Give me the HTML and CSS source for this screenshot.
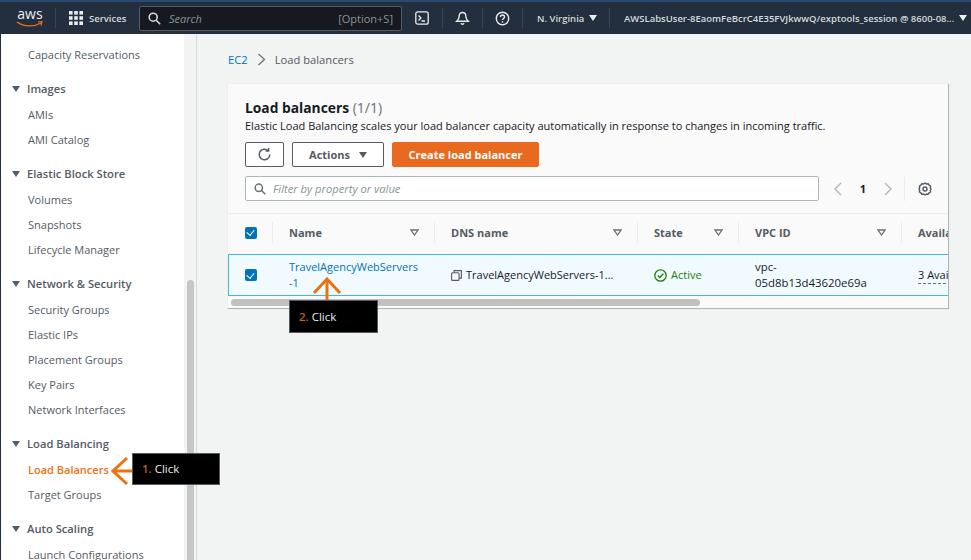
FILE: index.html
```html
<!DOCTYPE html>
<html>
    <head>
        <link rel="stylesheet" href="styles.css">
    </head>
    <body>
        <header class="topbar">
            <div class="logo">
                <span class="logo-text">aws</span>
                <svg class="logo-smile" width="28" height="7" viewBox="0 0 28 7"><path d="M1 1c7 5 17 5 24 1" fill="none" stroke="#ec7211" stroke-width="1.4"/><path d="M22 1l4-.5-1 4" fill="none" stroke="#ec7211" stroke-width="1.2"/></svg>
            </div>
            <div class="services">
                <svg width="14" height="14" viewBox="0 0 14 14" fill="#eaeded"><rect width="3.6" height="3.6"/><rect x="5.2" width="3.6" height="3.6"/><rect x="10.4" width="3.6" height="3.6"/><rect y="5.2" width="3.6" height="3.6"/><rect x="5.2" y="5.2" width="3.6" height="3.6"/><rect x="10.4" y="5.2" width="3.6" height="3.6"/><rect y="10.4" width="3.6" height="3.6"/><rect x="5.2" y="10.4" width="3.6" height="3.6"/><rect x="10.4" y="10.4" width="3.6" height="3.6"/></svg>
                <span>Services</span>
            </div>
            <div class="top-search">
                <svg width="13" height="13" viewBox="0 0 13 13" fill="none" stroke="#d5dbdb" stroke-width="1.6"><circle cx="5.2" cy="5.2" r="4"/><path d="M8.2 8.2l4 4"/></svg>
                <span class="top-search-text">Search</span>
                <span class="top-search-key">[Option+S]</span>
            </div>
            <div class="top-icon">
                <svg width="14" height="14" viewBox="0 0 14 14" fill="none" stroke="#eaeded" stroke-width="1.3"><rect x=".8" y=".8" width="12.4" height="12.4" rx="2"/><path d="M3.5 4.5l2.5 2.5-2.5 2.5M6.5 10h3.5"/></svg>
            </div>
            <div class="top-icon sep">
                <svg width="15" height="15" viewBox="0 0 15 15" fill="none" stroke="#eaeded" stroke-width="1.4"><path d="M7.5 1.5c-2.4 0-3.4 1.8-3.4 4 0 2-.8 3.3-2.4 4.8h11.6c-1.6-1.5-2.4-2.8-2.4-4.8 0-2.2-1-4-3.4-4z"/><path d="M6 12.3c.4 1.2 2.6 1.2 3 0"/></svg>
            </div>
            <div class="top-icon sep">
                <svg width="15" height="15" viewBox="0 0 15 15" fill="none" stroke="#eaeded" stroke-width="1.4"><circle cx="7.5" cy="7.5" r="6.2"/><path d="M5.5 6c0-2.6 4-2.6 4 0 0 1.6-2 1.4-2 3"/><path d="M7.5 10.2v1.4"/></svg>
            </div>
            <div class="top-menu region sep">N. Virginia <span class="caret"></span></div>
            <div class="top-menu account sep">AWSLabsUser-8EaomFeBcrC4E35FVJkwwQ/exptools_session @ 8600-08... <span class="caret"></span></div>
        </header>

        <div class="page">
            <nav class="sidebar">
                <a class="nav-item">Capacity Reservations</a>

                <div class="nav-section"><span class="caret dark"></span>Images</div>
                <a class="nav-item">AMIs</a>
                <a class="nav-item">AMI Catalog</a>

                <div class="nav-section"><span class="caret dark"></span>Elastic Block Store</div>
                <a class="nav-item">Volumes</a>
                <a class="nav-item">Snapshots</a>
                <a class="nav-item">Lifecycle Manager</a>

                <div class="nav-section"><span class="caret dark"></span>Network &amp; Security</div>
                <a class="nav-item">Security Groups</a>
                <a class="nav-item">Elastic IPs</a>
                <a class="nav-item">Placement Groups</a>
                <a class="nav-item">Key Pairs</a>
                <a class="nav-item">Network Interfaces</a>

                <div class="nav-section"><span class="caret dark"></span>Load Balancing</div>
                <a class="nav-item active">Load Balancers</a>
                <a class="nav-item">Target Groups</a>

                <div class="nav-section"><span class="caret dark"></span>Auto Scaling</div>
                <a class="nav-item">Launch Configurations</a>
            </nav>
            <div class="side-scroll"><div class="side-thumb"></div></div>

            <main class="content">
                <div class="breadcrumb">
                    <a>EC2</a>
                    <svg width="9" height="13" viewBox="0 0 9 13" fill="none" stroke="#687078" stroke-width="1.3"><path d="M1.5 1l6 5.5-6 5.5"/></svg>
                    <span>Load balancers</span>
                </div>

                <section class="card">
                    <div class="card-head">
                        <h1>Load balancers <span class="count">(1/1)</span></h1>
                        <p>Elastic Load Balancing scales your load balancer capacity automatically in response to changes in incoming traffic.</p>
                        <div class="actions">
                            <button class="btn btn-icon">
                                <svg width="15" height="15" viewBox="0 0 15 15" fill="none" stroke="#545b64" stroke-width="1.5"><path d="M12.8 7.5a5.3 5.3 0 1 1-1.7-3.9"/><path d="M11.6 1v3h-3"/></svg>
                            </button>
                            <button class="btn btn-actions">Actions <span class="caret dark"></span></button>
                            <button class="btn btn-primary">Create load balancer</button>
                        </div>
                        <div class="filter-row">
                            <div class="filter">
                                <svg width="12" height="12" viewBox="0 0 13 13" fill="none" stroke="#687078" stroke-width="1.6"><circle cx="5.2" cy="5.2" r="4"/><path d="M8.2 8.2l4 4"/></svg>
                                <span>Filter by property or value</span>
                            </div>
                            <div class="pager">
                                <svg width="10" height="14" viewBox="0 0 10 14" fill="none" stroke="#aab7b8" stroke-width="1.3"><path d="M8 1L2 7l6 6"/></svg>
                                <b>1</b>
                                <svg width="10" height="14" viewBox="0 0 10 14" fill="none" stroke="#aab7b8" stroke-width="1.3"><path d="M2 1l6 6-6 6"/></svg>
                            </div>
                            <div class="settings">
                                <svg width="14" height="14" viewBox="0 0 14 14" fill="none" stroke="#545b64" stroke-width="1.4"><path d="M7 1l1.5 1 1.7-.3.9 1.5 1.5.9-.3 1.7L13 7l-.7 1.2.3 1.7-1.500.9-.9 1.5-1.700-.3L7 13l-1.500-1-1.700.3-.9-1.500-1.500-.9.3-1.700L1 7l.7-1.200-.3-1.700 1.500-.9.9-1.500 1.700.3z"/><circle cx="7" cy="7" r="2"/></svg>
                            </div>
                        </div>
                    </div>

                    <div class="table">
                        <div class="cell th check"><span class="checkbox"></span></div>
                        <div class="cell th"><span>Name</span><svg class="sort" width="9" height="7" viewBox="0 0 9 7"><path d="M1 1h7L4.5 6z"/></svg></div>
                        <div class="cell th"><span>DNS name</span><svg class="sort" width="9" height="7" viewBox="0 0 9 7"><path d="M1 1h7L4.5 6z"/></svg></div>
                        <div class="cell th"><span>State</span><svg class="sort" width="9" height="7" viewBox="0 0 9 7"><path d="M1 1h7L4.5 6z"/></svg></div>
                        <div class="cell th"><span>VPC ID</span><svg class="sort" width="9" height="7" viewBox="0 0 9 7"><path d="M1 1h7L4.5 6z"/></svg></div>
                        <div class="cell th last"><span>Availa</span></div>

                        <div class="cell td check row-start"><span class="checkbox"></span></div>
                        <div class="cell td"><a class="link">TravelAgencyWebServers<br>-1</a></div>
                        <div class="cell td dns">
                            <svg width="11" height="11" viewBox="0 0 11 11" fill="none" stroke="#545b64" stroke-width="1.1"><rect x=".6" y="2.8" width="7.5" height="7.6" rx="1"/><path d="M3 2.6V.6h7.400v7.500H8.200"/></svg>
                            <span>TravelAgencyWebServers-1...</span>
                        </div>
                        <div class="cell td state">
                            <svg width="13" height="13" viewBox="0 0 13 13" fill="none" stroke="#1d8102" stroke-width="1.3"><circle cx="6.5" cy="6.5" r="5.7"/><path d="M3.800 6.500l2 2 3.500-3.800"/></svg>
                            <span>Active</span>
                        </div>
                        <div class="cell td vpc">vpc-<br>05d8b13d43620e69a</div>
                        <div class="cell td last"><span class="dotted">3 Avail</span></div>
                    </div>
                    <div class="h-scroll"><div class="h-thumb"></div></div>
                </section>
            </main>
        </div>

        <svg class="arrow arrow-left" width="22" height="30" viewBox="0 0 22 30" fill="none" stroke="#ec7211" stroke-width="3"><path d="M16 2L2 15l14 13"/><path d="M2 15h20"/></svg>
        <div class="callout callout-one"><em>1.</em> Click</div>
        <svg class="arrow arrow-up" width="30" height="24" viewBox="0 0 30 24" fill="none" stroke="#ec7211" stroke-width="3"><path d="M2 16L15 2l13 14"/><path d="M15 2v22"/></svg>
        <div class="callout callout-two"><em>2.</em> Click</div>
    </body>
</html>
```

FILE: styles.css
```css
html, body {
    margin: 0;
    height: 560px;
    overflow: hidden;
}

body {
    font-family: "Open Sans", "Noto Sans", sans-serif;
    font-size: 11px;
    color: #16191f;
    background-color: #f2f3f3;
    position: relative;
}

.topbar {
    height: 32px;
    padding-left: 16px;
    display: flex;
    align-items: center;
    background-color: #232f3e;
    border-top: 2px solid #2b4a70;
    color: #d5dbdb;
    white-space: nowrap;
    font-size: 9.5px;
    font-weight: 600;
}

.logo {
    width: 28px;
    height: 24px;
    margin-right: 11px;
    text-align: center;
    color: #eaeded;
}

.logo-text {
    font-size: 14px;
    line-height: 16px;
    font-weight: 400;
    display: block;
}

.logo-smile {
    display: block;
    margin-top: -1px;
}

.services {
    width: 84px;
    height: 20px;
    padding-left: 13px;
    box-sizing: border-box;
    display: flex;
    align-items: center;
    gap: 6px;
    border-left: 1px solid #3a4654;
}

.top-search {
    width: 263px;
    height: 25px;
    box-sizing: border-box;
    padding: 0 8px;
    display: flex;
    align-items: center;
    background-color: #16191f;
    border: 1px solid #545b64;
    border-radius: 2px;
    color: #879596;
    font-weight: 400;
    font-size: 11px;
}

.top-search-text {
    margin-left: 8px;
    font-style: italic;
    flex: 1;
}

.top-icon {
    width: 40px;
    height: 20px;
    box-sizing: border-box;
    display: flex;
    justify-content: center;
    align-items: center;
}

.sep {
    border-left: 1px solid #3a4654;
}

.top-menu {
    height: 20px;
    display: flex;
    align-items: center;
    gap: 5px;
    padding-left: 14px;
    box-sizing: border-box;
}

.region {
    width: 87px;
}

.caret {
    display: inline-block;
    width: 0;
    height: 0;
    border-left: 4px solid transparent;
    border-right: 4px solid transparent;
    border-top: 6px solid #eaeded;
}

.caret.dark {
    border-top-color: #545b64;
}

.page {
    display: flex;
    height: 526px;
}

.sidebar {
    width: 184px;
    flex: none;
    height: 526px;
    overflow: hidden;
    background-color: #fff;
    border-left: 1px solid #232f3e;
    padding-top: 8px;
    box-sizing: border-box;
}

.nav-item {
    display: block;
    height: 25px;
    line-height: 25px;
    padding-left: 27px;
    color: #545b64;
    white-space: nowrap;
}

.nav-item.active {
    color: #ec7211;
    font-weight: 600;
}

.nav-section {
    height: 26px;
    line-height: 25px;
    margin-top: 9px;
    padding-left: 11px;
    font-size: 11.2px;
    font-weight: 600;
    color: #545b64;
    white-space: nowrap;
}

.nav-section .caret {
    margin-right: 7px;
    vertical-align: 1px;
}

.side-scroll {
    width: 12px;
    flex: none;
    position: relative;
    background-color: #f2f3f3;
    border-right: 1px solid #d5dbdb;
}

.side-thumb {
    position: absolute;
    left: 3px;
    top: 246px;
    bottom: 0;
    width: 7px;
    background-color: #c4c6c8;
    border-radius: 4px 4px 0 0;
}

.content {
    flex: 1;
    min-width: 0;
    padding: 0 22px 0 31px;
}

.breadcrumb {
    height: 50px;
    display: flex;
    align-items: center;
    gap: 9px;
    font-size: 11.2px;
    color: #545b64;
}

.breadcrumb a {
    color: #0073bb;
}

.card {
    background-color: #fafafa;
    border-right: 1px solid #aab7b8;
    border-bottom: 1px solid #aab7b8;
    box-shadow: 0 0 1px #d5dbdb;
    overflow: hidden;
}

.card-head {
    padding: 14px 0 0 17px;
}

.card h1 {
    margin: 0;
    font-size: 13.8px;
    line-height: 20px;
    font-weight: 700;
}

.count {
    font-size: 14px;
    font-weight: 400;
    color: #687078;
}

.card p {
    margin: 0;
    line-height: 16px;
    font-size: 11px;
    white-space: nowrap;
}

.actions {
    margin-top: 8px;
    display: flex;
    gap: 8px;
}

.btn {
    height: 25px;
    font-family: inherit;
    font-size: 11px;
    font-weight: 700;
    border-radius: 2px;
    background-color: #fff;
    border: 1px solid #545b64;
    color: #545b64;
    padding: 0;
    display: flex;
    align-items: center;
    justify-content: center;
}

.btn-icon {
    width: 39px;
}

.btn-actions {
    width: 92px;
    gap: 9px;
}

.btn-primary {
    width: 147px;
    background-color: #e9691f;
    border-color: #e9691f;
    color: #fff;
}

.filter-row {
    margin-top: 9px;
    display: flex;
    align-items: center;
}

.filter {
    flex: none;
    width: 574px;
    height: 25px;
    box-sizing: border-box;
    padding-left: 8px;
    display: flex;
    align-items: center;
    gap: 7px;
    background-color: #fff;
    border: 1px solid #aab7b8;
    border-radius: 2px;
    color: #879596;
    font-style: italic;
    font-size: 11.2px;
}

.pager {
    flex: none;
    width: 60px;
    margin-left: 14px;
    display: flex;
    justify-content: space-between;
    align-items: center;
}

.settings {
    margin-left: 11px;
    padding-left: 13px;
    height: 24px;
    display: flex;
    align-items: center;
    border-left: 1px solid #eaeded;
}

.table {
    margin-top: 12px;
    display: grid;
    grid-template-columns: 45px 162px 203px 101px 163px 60px;
    grid-template-rows: 40px 42px;
    border-top: 1px solid #eaeded;
}

.cell {
    display: flex;
    align-items: center;
    padding-left: 16px;
    white-space: nowrap;
    overflow: hidden;
}

.check {
    padding-left: 17px;
}

.th {
    font-weight: 700;
    color: #545b64;
    justify-content: space-between;
    padding-right: 16px;
    padding-bottom: 3px;
    position: relative;
}

.th::after {
    content: "";
    position: absolute;
    right: 0;
    top: 8px;
    height: 21px;
    width: 1px;
    background-color: #eaeded;
}

.th.last::after {
    display: none;
}

.sort {
    flex: none;
    fill: none;
    stroke: #687078;
    stroke-width: 1.3;
}

.checkbox {
    width: 12px;
    height: 12px;
    border-radius: 2px;
    background-color: #0073bb;
    position: relative;
}

.checkbox::after {
    content: "";
    position: absolute;
    left: 3px;
    top: 1.5px;
    width: 3.5px;
    height: 6px;
    border-right: 1.6px solid #fff;
    border-bottom: 1.6px solid #fff;
    transform: rotate(40deg);
}

.td {
    background-color: #f1faff;
    border-top: 1px solid #44b9d6;
    border-bottom: 1px solid #44b9d6;
    line-height: 16px;
}

.row-start {
    border-left: 1px solid #44b9d6;
    padding-left: 16px;
}

.link {
    color: #0073bb;
}

.dns {
    gap: 4px;
}

.state {
    color: #1d8102;
    gap: 4px;
}

.vpc {
    display: block;
    padding-top: 4px;
    font-size: 11.4px;
}

.dotted {
    border-bottom: 1px dashed #687078;
}

.h-scroll {
    height: 12px;
    position: relative;
}

.h-thumb {
    position: absolute;
    left: 3px;
    top: 3px;
    width: 469px;
    height: 7px;
    border-radius: 4px;
    background-color: #c1c1c1;
}

.arrow {
    position: absolute;
}

.arrow-left {
    left: 111px;
    top: 456px;
}

.arrow-up {
    left: 312px;
    top: 277px;
}

.callout {
    position: absolute;
    box-sizing: border-box;
    padding-left: 9px;
    background-color: #000;
    border: 1px solid #545b64;
    color: #eaeded;
    font-size: 11.5px;
}

.callout em {
    font-style: normal;
    font-weight: 600;
    color: #c7600f;
}

.callout-one {
    left: 132px;
    top: 453px;
    width: 88px;
    height: 32px;
    line-height: 30px;
}

.callout-two {
    left: 289px;
    top: 300px;
    width: 89px;
    height: 33px;
    line-height: 31px;
}
```
